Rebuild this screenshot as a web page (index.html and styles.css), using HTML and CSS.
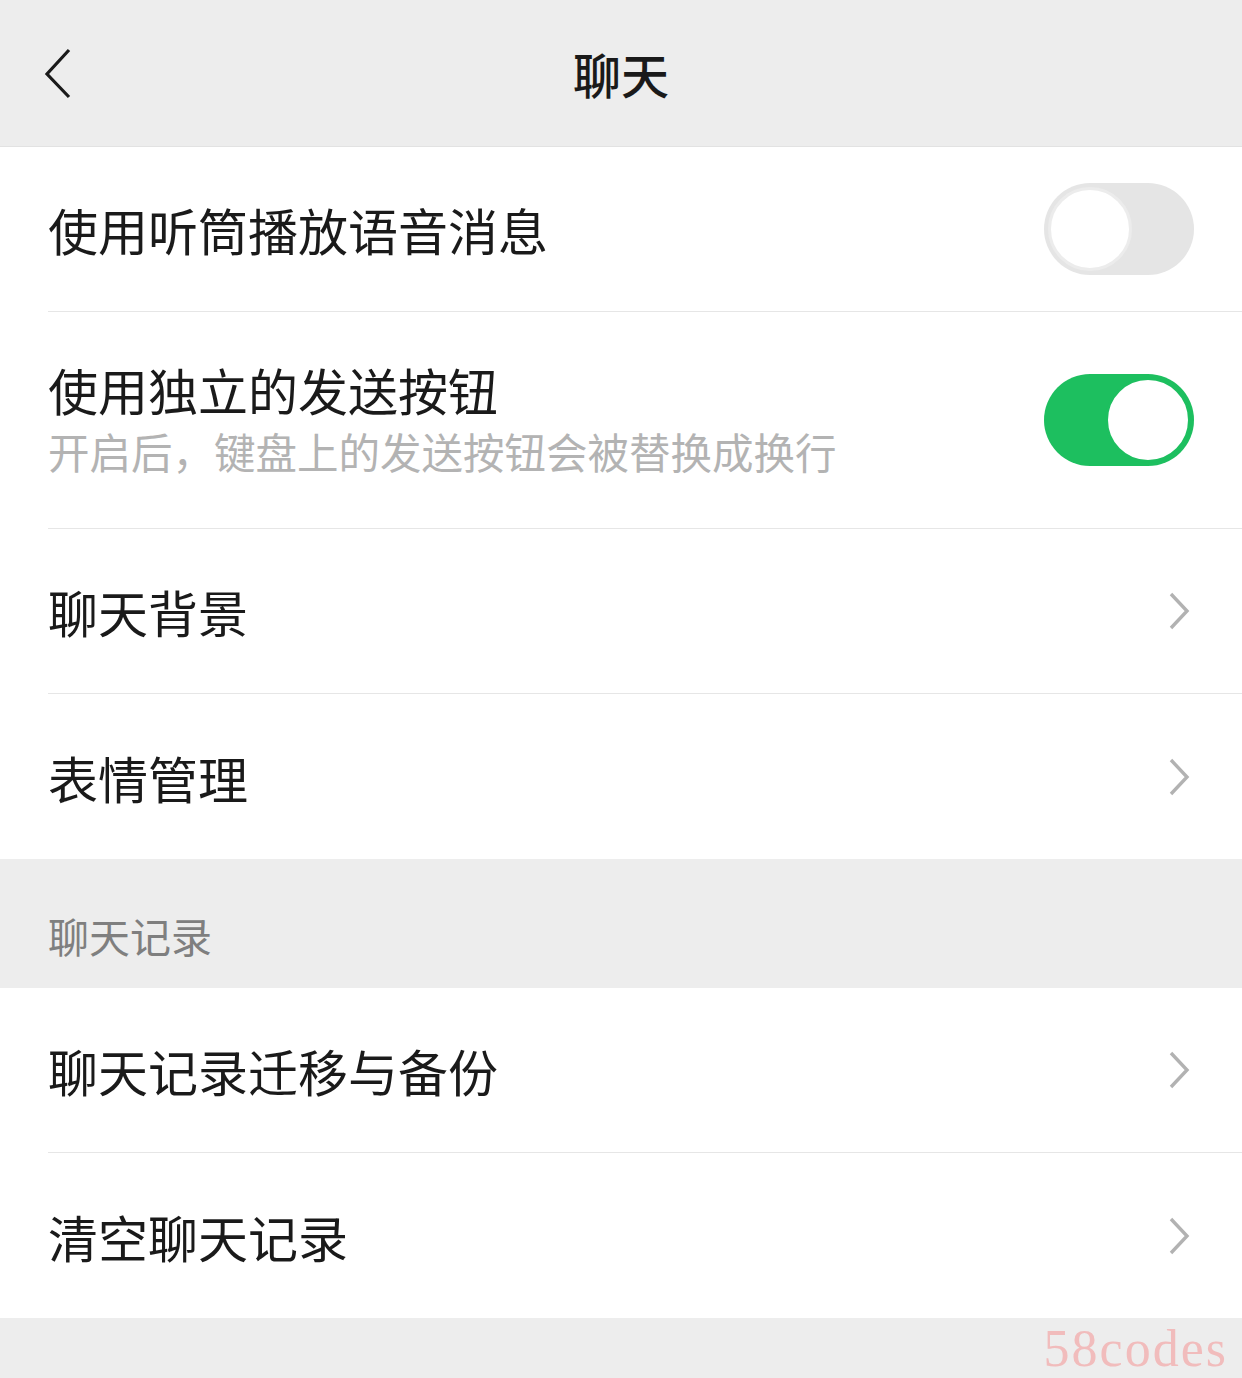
FILE: index.html
```html
<html>
    <head>
        <meta charset="utf-8">
        <title>聊天</title>
        <link rel="stylesheet" href="styles.css">
    </head>
    <body>
        <div class="nav">
            <div class="nav-back">
                <svg width="32" height="52" viewBox="0 0 32 52"><path d="M27 3 L5 27 L27 50" fill="none" stroke="#1a1a1a" stroke-width="3.2" stroke-linejoin="miter"/></svg>
            </div>
            <div class="nav-title">聊天</div>
            <div></div>
        </div>

        <div class="group">
            <div class="cell">
                <div class="cell-body">
                    <div class="cell-title">使用听筒播放语音消息</div>
                </div>
                <div class="switch"><div class="switch-knob"></div></div>
            </div>
            <div class="cell cell-tall">
                <div class="cell-body">
                    <div class="cell-title">使用独立的发送按钮</div>
                    <div class="cell-desc">开启后，键盘上的发送按钮会被替换成换行</div>
                </div>
                <div class="switch switch-on"><div class="switch-knob"></div></div>
            </div>
            <div class="cell">
                <div class="cell-body">
                    <div class="cell-title">聊天背景</div>
                </div>
                <svg class="arrow" width="22" height="40" viewBox="0 0 22 40"><path d="M3 3 L19 20 L3 37" fill="none" stroke="#b2b2b2" stroke-width="3.4"/></svg>
            </div>
            <div class="cell">
                <div class="cell-body">
                    <div class="cell-title">表情管理</div>
                </div>
                <svg class="arrow" width="22" height="40" viewBox="0 0 22 40"><path d="M3 3 L19 20 L3 37" fill="none" stroke="#b2b2b2" stroke-width="3.4"/></svg>
            </div>
        </div>

        <div class="section-label">聊天记录</div>

        <div class="group">
            <div class="cell">
                <div class="cell-body">
                    <div class="cell-title">聊天记录迁移与备份</div>
                </div>
                <svg class="arrow" width="22" height="40" viewBox="0 0 22 40"><path d="M3 3 L19 20 L3 37" fill="none" stroke="#b2b2b2" stroke-width="3.4"/></svg>
            </div>
            <div class="cell">
                <div class="cell-body">
                    <div class="cell-title">清空聊天记录</div>
                </div>
                <svg class="arrow" width="22" height="40" viewBox="0 0 22 40"><path d="M3 3 L19 20 L3 37" fill="none" stroke="#b2b2b2" stroke-width="3.4"/></svg>
            </div>
        </div>

        <div class="footer">
            <span class="watermark">58codes</span>
        </div>
    </body>
</html>
```

FILE: styles.css
```css
body {
    margin: 0px;
    width: 1242px;
    min-height: 1378px;
    background-color: #ededed;
    font-family: "Noto Sans CJK SC", "Noto Sans", sans-serif;
    color: #1a1a1a;
}
.nav {
    height: 146px;
    display: grid;
    grid-template-columns: 1fr auto 1fr;
    align-items: center;
    border-bottom: 1px solid #e2e2e2;
}
.nav-back {
    padding-left: 42px;
    display: flex;
    align-items: center;
}
.nav-title {
    font-size: 48px;
    font-weight: 500;
    line-height: 60px;
}
.group {
    background-color: #ffffff;
}
.cell {
    margin-left: 48px;
    padding-right: 48px;
    height: 164px;
    display: flex;
    align-items: center;
    border-top: 1px solid #e6e6e6;
}
.cell:first-child {
    border-top: none;
}
.cell:last-child {
    height: 165px;
}
.cell-tall {
    height: 216px;
}
.cell-body {
    flex-grow: 1;
}
.cell-title {
    font-size: 50px;
    line-height: 62px;
}
.cell-desc {
    font-size: 41.5px;
    line-height: 62px;
    color: #b3b3b3;
}
.arrow {
    margin-right: 4px;
}
.switch {
    width: 150px;
    height: 92px;
    border-radius: 46px;
    background-color: #e5e5e5;
    box-sizing: border-box;
    padding: 4px;
    display: flex;
    justify-content: flex-start;
}
.switch-knob {
    width: 84px;
    height: 84px;
    border-radius: 50%;
    background-color: #ffffff;
    box-sizing: border-box;
    border: 3px solid #ececec;
}
.switch-on {
    background-color: #1dbf5f;
    justify-content: flex-end;
}
.switch-on .switch-knob {
    border-color: #1dbf5f;
    width: 86px;
    height: 86px;
    margin: -1px;
}
.section-label {
    height: 129px;
    box-sizing: border-box;
    padding: 46px 0px 0px 48px;
    font-size: 41px;
    line-height: 60px;
    color: #7f7f7f;
}
.footer {
    height: 61px;
    display: flex;
    justify-content: flex-end;
    align-items: flex-end;
    padding-right: 14px;
}
.watermark {
    font-family: "Liberation Serif", serif;
    font-size: 52px;
    line-height: 60px;
    letter-spacing: 2px;
    color: #f1bcbc;
}
```
